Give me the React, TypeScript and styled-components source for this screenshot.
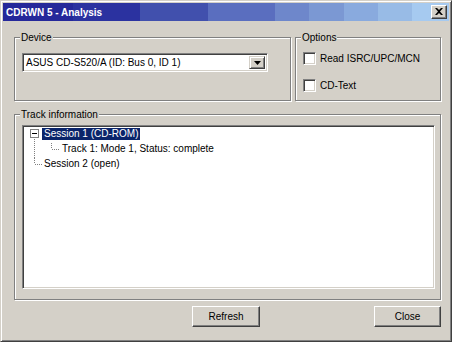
import styled, { createGlobalStyle } from 'styled-components';

const GlobalStyle = createGlobalStyle`
  html, body {
    margin: 0;
    padding: 0;
    background: #d4d0c8;
  }
  body {
    font-family: "Liberation Sans", Arial, sans-serif;
    font-size: 10px;
    color: #000;
  }
`;

const Window = styled.div`
  width: 452px;
  height: 342px;
  box-sizing: border-box;
  border: 1px solid;
  border-color: #d4d0c8 #404040 #404040 #d4d0c8;
  box-shadow: inset 1px 1px #fff, inset -1px -1px #808080;
  padding: 2px;
  background: #d4d0c8;
  display: flex;
  flex-direction: column;
`;

const TitleBar = styled.div`
  height: 18px;
  flex: none;
  display: flex;
  align-items: center;
  justify-content: space-between;
  padding: 0 2px 0 3px;
  color: #fff;
  font-weight: bold;
  font-size: 10px;
  background: linear-gradient(
    to right,
    #25289a 0 70px,
    #2b32a0 70px 137px,
    #4150ad 137px 205px,
    #5a6ebf 205px 272px,
    #6e87cb 272px 306px,
    #7b98d3 306px 341px,
    #89aade 341px 375px,
    #98bbe6 375px 409px,
    #a6caf0 409px
  );
`;

const TitleText = styled.span`
  white-space: nowrap;
`;

const CaptionButton = styled.div`
  width: 16px;
  height: 14px;
  box-sizing: border-box;
  border: 1px solid;
  border-color: #fff #404040 #404040 #fff;
  box-shadow: inset -1px -1px #808080;
  background: #d4d0c8;
  display: flex;
  align-items: center;
  justify-content: center;
  padding-bottom: 1px;
  padding-right: 1px;
`;

const Body = styled.div`
  flex: 1;
  display: flex;
  flex-direction: column;
  padding: 10px 8px 0 11px;
`;

const TopRow = styled.div`
  display: flex;
  gap: 4px;
`;

const Group = styled.fieldset<{ $width?: number; $height: number; $grow?: boolean }>`
  margin: 0;
  padding: 0;
  min-width: 0;
  box-sizing: border-box;
  width: ${p => (p.$width ? `${p.$width}px` : 'auto')};
  height: ${p => p.$height}px;
  border: 1px solid #808080;
  box-shadow: inset 1px 1px #fff, 1px 1px #fff;
  flex: ${p => (p.$grow ? '1' : 'none')};
`;

const Legend = styled.legend`
  margin-left: 5px;
  padding: 0 1px;
  background: #d4d0c8;
  line-height: 13px;
  height: 13px;
`;

const GroupContent = styled.div<{ $pad: string; $gap?: number }>`
  padding: ${p => p.$pad};
  display: flex;
  flex-direction: column;
  gap: ${p => p.$gap ?? 0}px;
`;

const Combo = styled.div`
  width: 246px;
  height: 19px;
  box-sizing: border-box;
  border: 1px solid;
  border-color: #808080 #fff #fff #808080;
  box-shadow: inset 1px 1px #404040, inset -1px -1px #d4d0c8;
  background: #fff;
  display: flex;
  align-items: center;
  padding: 2px;
`;

const ComboText = styled.span`
  flex: 1;
  padding-left: 1px;
  white-space: nowrap;
  overflow: hidden;
  line-height: 13px;
`;

const DropButton = styled.div`
  width: 16px;
  height: 13px;
  box-sizing: border-box;
  border: 1px solid;
  border-color: #d4d0c8 #404040 #404040 #d4d0c8;
  box-shadow: inset 1px 1px #fff, inset -1px -1px #808080;
  background: #d4d0c8;
  display: flex;
  align-items: center;
  justify-content: center;
`;

const CheckRow = styled.label`
  display: flex;
  align-items: center;
  gap: 4px;
  height: 13px;
  line-height: 13px;
`;

const CheckBox = styled.span`
  width: 13px;
  height: 13px;
  box-sizing: border-box;
  border: 1px solid;
  border-color: #808080 #fff #fff #808080;
  box-shadow: inset 1px 1px #404040, inset -1px -1px #d4d0c8;
  background: #fff;
  flex: none;
`;

const ListBox = styled.div`
  height: 164px;
  box-sizing: border-box;
  border: 1px solid;
  border-color: #808080 #fff #fff #808080;
  box-shadow: inset 1px 1px #404040, inset -1px -1px #d4d0c8;
  background: #fff;
  padding: 2px;
`;

const TreeRow = styled.div`
  height: 15px;
  display: flex;
  align-items: flex-start;
`;

const Gutter = styled.svg`
  flex: none;
  display: block;
`;

const NodeLabel = styled.span<{ $selected?: boolean }>`
  height: 12px;
  line-height: 12px;
  padding: 0 2px;
  white-space: nowrap;
  background: ${p => (p.$selected ? '#0a246a' : 'transparent')};
  color: ${p => (p.$selected ? '#fff' : '#000')};
`;

const ButtonRow = styled.div`
  display: flex;
  justify-content: flex-end;
  gap: 114px;
  margin-top: 6px;
`;

const Button = styled.button<{ $width: number }>`
  width: ${p => p.$width}px;
  height: 21px;
  box-sizing: border-box;
  border: 1px solid;
  border-color: #fff #404040 #404040 #fff;
  box-shadow: inset -1px -1px #808080;
  background: #d4d0c8;
  font-family: "Liberation Sans", Arial, sans-serif;
  font-size: 10px;
  color: #000;
  padding: 0;
`;

const dot = { stroke: '#808080', strokeDasharray: '1 1', shapeRendering: 'crispEdges' as const };

export default function App() {
  return (
    <>
      <GlobalStyle />
      <Window>
        <TitleBar>
          <TitleText>CDRWN 5 - Analysis</TitleText>
          <CaptionButton>
            <svg width="8" height="7" viewBox="0 0 8 7">
              <path d="M0 0h2l2 2 2-2h2L5 3.5 8 7H6L4 5 2 7H0l3-3.5z" fill="#000" />
            </svg>
          </CaptionButton>
        </TitleBar>
        <Body>
          <TopRow>
            <Group $width={277} $height={70}>
              <Legend>Device</Legend>
              <GroupContent $pad="9px 0 0 7px">
                <Combo>
                  <ComboText>ASUS CD-S520/A (ID: Bus 0, ID 1)</ComboText>
                  <DropButton>
                    <svg width="7" height="4" viewBox="0 0 7 4">
                      <path d="M0 0h7L3.5 4z" fill="#000" />
                    </svg>
                  </DropButton>
                </Combo>
              </GroupContent>
            </Group>
            <Group $height={70} $grow>
              <Legend>Options</Legend>
              <GroupContent $pad="8px 0 0 7px" $gap={14}>
                <CheckRow>
                  <CheckBox />
                  Read ISRC/UPC/MCN
                </CheckRow>
                <CheckRow>
                  <CheckBox />
                  CD-Text
                </CheckRow>
              </GroupContent>
            </Group>
          </TopRow>
          <Group $height={192} style={{ marginTop: 7 }}>
            <Legend>Track information</Legend>
            <GroupContent $pad="4px 5px 0 7px">
              <ListBox>
                <TreeRow>
                  <Gutter width="17" height="15">
                    <rect x="5.5" y="1.5" width="8" height="8" fill="#fff" stroke="#808080" shapeRendering="crispEdges" />
                    <line x1="7" y1="5.5" x2="12" y2="5.5" stroke="#000" shapeRendering="crispEdges" />
                    <line x1="9.5" y1="11" x2="9.5" y2="15" {...dot} />
                  </Gutter>
                  <NodeLabel $selected>Session 1 (CD-ROM)</NodeLabel>
                </TreeRow>
                <TreeRow>
                  <Gutter width="35" height="15">
                    <line x1="9.5" y1="0" x2="9.5" y2="15" {...dot} />
                    <line x1="26.5" y1="0" x2="26.5" y2="6" {...dot} />
                    <line x1="27" y1="6.5" x2="34" y2="6.5" {...dot} />
                  </Gutter>
                  <NodeLabel>Track 1: Mode 1, Status: complete</NodeLabel>
                </TreeRow>
                <TreeRow>
                  <Gutter width="17" height="15">
                    <line x1="9.5" y1="0" x2="9.5" y2="6" {...dot} />
                    <line x1="10" y1="6.5" x2="17" y2="6.5" {...dot} />
                  </Gutter>
                  <NodeLabel>Session 2 (open)</NodeLabel>
                </TreeRow>
              </ListBox>
            </GroupContent>
          </Group>
          <ButtonRow>
            <Button $width={68}>Refresh</Button>
            <Button $width={67}>Close</Button>
          </ButtonRow>
        </Body>
      </Window>
    </>
  );
}
